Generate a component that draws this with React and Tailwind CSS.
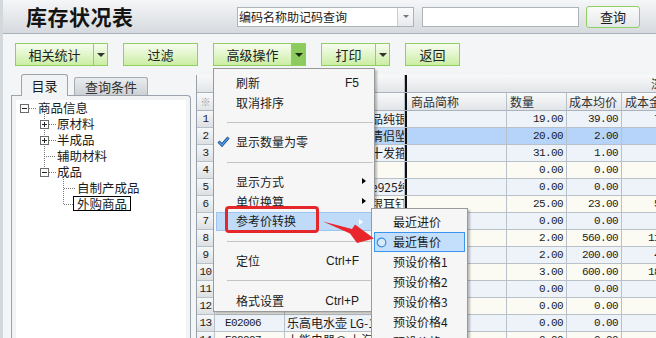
import React from "react";

const rows = [
  { no: 1, code: "E01001", name: "韩版时尚水晶饰品纯银", qty: "19.00", price: "39.00", amt: "741.00" },
  { no: 2, code: "E01002", name: "纯银时尚韩版款情侣坠", qty: "20.00", price: "2.00", amt: "40.00", selected: true },
  { no: 3, code: "E01003", name: "韩版水钻珍珠镶十发箍", qty: "31.00", price: "1.00", amt: "31.00" },
  { no: 4, code: "E01004", name: "水晶手链", qty: "0.00", price: "0.00", amt: "0.00" },
  { no: 5, code: "E01005", name: "纯银吊坠锁骨链e925纯银", qty: "0.00", price: "0.00", amt: "0.00" },
  { no: 6, code: "E01006", name: "时尚气质镶钻纯银耳钉", qty: "25.00", price: "23.00", amt: "575.00" },
  { no: 7, code: "E01007", name: "复古银手镯", qty: "0.00", price: "0.00", amt: "0.00" },
  { no: 8, code: "E02001", name: "美的电饭煲", qty: "2.00", price: "560.00", amt: "1120.00" },
  { no: 9, code: "E02002", name: "九阳豆浆机", qty: "2.00", price: "200.00", amt: "400.00" },
  { no: 10, code: "E02003", name: "格力空调扇", qty: "3.00", price: "600.00", amt: "1800.00" },
  { no: 11, code: "E02004", name: "苏泊尔电压力锅", qty: "0.00", price: "0.00", amt: "0.00" },
  { no: 12, code: "E02005", name: "飞利浦电熨斗", qty: "0.00", price: "0.00", amt: "0.00" },
  { no: 13, code: "E02006", name: "乐高电水壶  LG-1808", qty: "0.00", price: "0.00", amt: "0.00" },
  { no: 14, code: "E02007", name: "上能电器@ 上海", qty: "0.00", price: "0.00", amt: "0.00" },
];

const num = "font-['Liberation_Mono',monospace] text-[11px] tracking-[-0.6px]";
const greenBtn =
  "flex h-[23px] shrink-0 items-center justify-center border border-[#8fd05e] bg-gradient-to-b from-[#f7fcf0] to-[#cbeea2] text-[13px] leading-none text-[#222]";

function Caret({ dark }) {
  return <span className={`h-0 w-0 border-x-[4px] border-t-[4px] border-x-transparent ${dark ? "border-t-[#1c2a10]" : "border-t-[#333]"}`} />;
}

function SplitButton({ label, width, pressed }) {
  return (
    <div className="flex shrink-0">
      <div className={`${greenBtn} ${width}`}>{label}</div>
      <div
        className={`flex h-[23px] w-[14px] items-center justify-center border border-l-0 border-[#8fd05e] ${
          pressed ? "bg-[#8ccb5e]" : "bg-gradient-to-b from-[#f7fcf0] to-[#cbeea2]"
        }`}
      >
        <Caret dark={pressed} />
      </div>
    </div>
  );
}

function Header() {
  return (
    <div className="flex h-[34px] shrink-0 items-center border-b border-[#a6b0ba] bg-gradient-to-b from-[#f5f6f8] to-[#d6dade] pl-[23px]">
      <span className="w-[211px] shrink-0 text-[21px] font-bold leading-none tracking-[0.5px] text-[#141414]">库存状况表</span>
      <div className="flex h-[20px] w-[177px] shrink-0 border border-[#abb3bb] bg-white">
        <span className="flex-1 pl-[1px] text-[12px] leading-[18px]">编码名称助记码查询</span>
        <span className="flex w-[16px] items-center justify-center border-l border-[#c9ced3] bg-gradient-to-b from-[#fbfbfc] to-[#e8ebee]">
          <span className="h-0 w-0 border-x-[3px] border-t-[3px] border-x-transparent border-t-[#777]" />
        </span>
      </div>
      <div className="ml-[8px] h-[20px] w-[157px] shrink-0 border border-[#abb3bb] bg-white" />
      <div className="ml-[7px] flex h-[22px] w-[54px] shrink-0 items-center justify-center rounded-[3px] border border-[#8fd05e] bg-gradient-to-b from-[#fbfbfb] to-[#e4e7e9] text-[13px] leading-none">
        查询
      </div>
    </div>
  );
}

function Toolbar() {
  return (
    <div className="mt-[9px] flex h-[23px] shrink-0 pl-[12px]">
      <SplitButton label="相关统计" width="w-[79px]" />
      <div className={`${greenBtn} ml-[15px] w-[75px]`}>过滤</div>
      <div className="ml-[15px]">
        <SplitButton label="高级操作" width="w-[79px]" pressed />
      </div>
      <div className="ml-[15px]">
        <SplitButton label="打印" width="w-[55px]" />
      </div>
      <div className={`${greenBtn} ml-[15px] w-[55px]`}>返回</div>
    </div>
  );
}

function TreeLines() {
  const dot = { stroke: "#7a7a7a", strokeWidth: 1, strokeDasharray: "1 1", fill: "none" };
  const box = (x, y, plus) => (
    <g>
      <rect x={x + 0.5} y={y + 0.5} width="8" height="8" fill="#fff" stroke="#6b6b6b" />
      <path d={`M${x + 2} ${y + 4.5}H${x + 7}`} stroke="#222" />
      {plus ? <path d={`M${x + 4.5} ${y + 2}V${y + 7}`} stroke="#222" /> : null}
    </g>
  );
  return (
    <svg className="absolute left-0 top-0" width="170" height="120">
      <path d="M28.5 12V72" {...dot} />
      <path d="M13 8.5H21" {...dot} />
      <path d="M33 24.5H40M33 40.5H40M28 56.5H40M33 72.5H40" {...dot} />
      <path d="M47.5 77V104" {...dot} />
      <path d="M48 88.5H59M48 104.5H57" {...dot} />
      {box(4, 4, false)}
      {box(24, 20, true)}
      {box(24, 36, true)}
      {box(24, 68, false)}
    </svg>
  );
}

function LeftPanel() {
  const items = [
    { t: "商品信息", pl: "pl-[22px]" },
    { t: "原材料", pl: "pl-[41px]" },
    { t: "半成品", pl: "pl-[41px]" },
    { t: "辅助材料", pl: "pl-[41px]" },
    { t: "成品", pl: "pl-[41px]" },
    { t: "自制产成品", pl: "pl-[61px]" },
  ];
  return (
    <div className="ml-[8px] flex w-[180px] shrink-0 flex-col">
      <div className="flex h-[21px] shrink-0 items-end pl-[10px]">
        <div className="relative z-10 -mb-px flex h-[22px] w-[47px] items-center justify-center rounded-t-[3px] border border-b-0 border-[#9ba4ad] bg-[#f1f3f4] text-[13px] leading-none">
          目录
        </div>
        <div className="ml-[6px] flex h-[18px] w-[74px] items-center justify-center rounded-t-[3px] border border-b-0 border-[#a3acb5] bg-gradient-to-b from-[#eaecee] to-[#ccd1d5] text-[13px] leading-none text-[#333]">
          查询条件
        </div>
      </div>
      <div className="min-h-0 flex-1 rounded-tr-[4px] border border-b-0 border-[#9ba4ad] bg-[#f1f3f4] px-[4px] pt-[4px]">
        <div className="relative h-full bg-white text-[12.5px] leading-[16px]">
          <TreeLines />
          <div className="relative">
            {items.map((it) => (
              <div key={it.t} className={`h-[16px] ${it.pl}`}>
                {it.t}
              </div>
            ))}
            <div className="h-[16px] pl-[57px]">
              <span className="inline-block h-[15px] border border-black px-[3px] leading-[13px]">外购商品</span>
            </div>
          </div>
        </div>
      </div>
    </div>
  );
}

function Cell({ w, className = "", children }) {
  return (
    <div className={`flex h-full shrink-0 items-center overflow-hidden whitespace-nowrap border-r border-[#b8c1ca] ${w} ${className}`}>
      {children}
    </div>
  );
}

function Grid() {
  const hdr = "bg-gradient-to-b from-[#f8f9fa] to-[#e2e5e8]";
  return (
    <div className="ml-[5px] mt-[1px] flex min-w-0 flex-1 flex-col overflow-hidden border-l border-[#97a1ab] bg-white">
      <div className={`flex h-[18px] shrink-0 border-b border-[#aab3bc] ${hdr}`}>
        <Cell w="w-[208px]" />
        <div className="w-[2px] shrink-0 bg-[#111]" />
        <div className="flex-1 whitespace-nowrap pl-[244px] text-[12px] leading-[17px] text-[#333]">深圳仓库</div>
      </div>
      <div className={`flex h-[18px] shrink-0 border-b border-[#aab3bc] text-[12px] text-[#333] ${hdr}`}>
        <Cell w="w-[18px]" className="justify-center border-[#a5aeb7] text-[10px] text-[#999]">※</Cell>
        <Cell w="w-[70px]" className="pl-[3px]">商品编码</Cell>
        <Cell w="w-[120px]" className="pl-[3px]">商品名称</Cell>
        <div className="w-[2px] shrink-0 bg-[#111]" />
        <Cell w="w-[100px]" className="pl-[4px]">商品简称</Cell>
        <Cell w="w-[60px]" className="pl-[3px]">数量</Cell>
        <Cell w="w-[55px]" className="pl-[2px]">成本均价</Cell>
        <Cell w="w-[72px]" className="pl-[3px]">成本金额</Cell>
      </div>
      {rows.map((r) => {
        const bg = r.selected ? "bg-[#b6d4f9]" : r.no % 2 ? "bg-[#eef2f9]" : "bg-[#fcfbf3]";
        return (
          <div key={r.no} className="flex h-[17px] shrink-0 border-b border-[#b8c1ca] text-[12px] leading-none">
            <Cell w="w-[18px]" className={`justify-center border-[#a5aeb7] bg-gradient-to-b from-[#f6f7f8] to-[#dde0e3] ${num}`}>
              {r.no}
            </Cell>
            <Cell w="w-[70px]" className={`pl-[10px] ${bg} ${num}`}>{r.code}</Cell>
            <Cell w="w-[120px]" className={`pl-[2px] ${bg}`}>{r.name}</Cell>
            <div className="w-[2px] shrink-0 bg-[#111]" />
            <Cell w="w-[100px]" className={bg} />
            <Cell w="w-[60px]" className={`justify-end pr-[3px] ${bg} ${num}`}>{r.qty}</Cell>
            <Cell w="w-[55px]" className={`justify-end pr-[3px] ${bg} ${num}`}>{r.price}</Cell>
            <Cell w="w-[72px]" className={`justify-end pr-[3px] ${bg} ${num}`}>{r.amt}</Cell>
          </div>
        );
      })}
    </div>
  );
}

function Check() {
  return (
    <svg width="13" height="11" viewBox="0 0 13 11" className="absolute left-[3px] top-[4px]">
      <path d="M1.5 5.5L5 9L11.5 1.5" fill="none" stroke="#1d3f6e" strokeWidth="3" />
      <path d="M1.5 5.5L5 9L11.5 1.5" fill="none" stroke="#4b9af0" strokeWidth="1.6" />
    </svg>
  );
}

function SubArrow({ light }) {
  return (
    <span
      className={`absolute right-[8px] top-[6px] h-0 w-0 border-y-[3.5px] border-l-[4px] border-y-transparent ${
        light ? "border-l-white" : "border-l-black"
      }`}
    />
  );
}

function ContextMenu() {
  const item = "relative flex h-[19.8px] items-center pl-[22px] pr-[15px]";
  const sep = (
    <div className="flex h-[19.8px] items-center pl-[13px] pr-[1px]">
      <div className="h-px w-full bg-[#c4c4c4]" />
    </div>
  );
  const sc = "ml-auto font-['Liberation_Sans',sans-serif] text-[12px]";
  return (
    <div className="absolute left-[213px] top-[68px] w-[162px] border border-[#9a9a9a] bg-[#f6f6f6] pt-[4px] text-[12px] leading-none shadow-[2px_2px_2px_rgba(0,0,0,0.25)]">
      <div className={item}>
        刷新<span className={sc}>F5</span>
      </div>
      <div className={item}>取消排序</div>
      {sep}
      <div className={item}>
        <Check />
        显示数量为零
      </div>
      {sep}
      <div className={item}>
        显示方式
        <SubArrow />
      </div>
      <div className={item}>
        单位换算
        <SubArrow />
      </div>
      <div className="relative mx-[2px] flex h-[19.8px] items-center border border-[#9cc6f1] bg-[#c0dbf8] pl-[19px]">
        参考价转换
        <SubArrow light />
      </div>
      {sep}
      <div className={item}>
        定位<span className={sc}>Ctrl+F</span>
      </div>
      {sep}
      <div className={item}>
        格式设置<span className={sc}>Ctrl+P</span>
      </div>
    </div>
  );
}

function SubMenu() {
  const item = "flex h-[20px] items-center pl-[21px]";
  return (
    <div className="absolute left-[371px] top-[208px] h-[140px] w-[97px] border border-[#9a9a9a] bg-[#f6f6f6] pt-[3px] text-[12px] leading-none shadow-[2px_2px_2px_rgba(0,0,0,0.25)]">
      <div className={item}>最近进价</div>
      <div className="relative mx-[2px] flex h-[20px] items-center border border-[#3d96ee] bg-[#c4dffb] pl-[18px]">
        <svg width="11" height="11" className="absolute left-[1px] top-[3.5px]">
          <circle cx="5.5" cy="5.5" r="4.3" fill="#dbeafb" stroke="#3a8ee6" strokeWidth="1.2" />
        </svg>
        最近售价
      </div>
      <div className={item}>预设价格1</div>
      <div className={item}>预设价格2</div>
      <div className={item}>预设价格3</div>
      <div className={item}>预设价格4</div>
      <div className={item}>预设价格5</div>
    </div>
  );
}

export default function App() {
  return (
    <div className="relative flex h-[338px] w-[656px] overflow-hidden bg-[#f3f5f7] font-['Noto_Sans_CJK_SC',sans-serif] text-[12px] text-[#1b1b1b]">
      <div className="w-[3px] shrink-0 bg-[#d3d8dc]" />
      <div className="flex min-w-0 flex-1 flex-col">
        <Header />
        <Toolbar />
        <div className="mt-[8px] flex min-h-0 flex-1">
          <LeftPanel />
          <Grid />
        </div>
      </div>
      <ContextMenu />
      <SubMenu />
      <div className="absolute left-[225px] top-[206px] h-[27px] w-[94px] rounded-[4px] border-[3px] border-[#e5262b]" />
      <svg className="absolute left-[318px] top-[215px]" width="62" height="34">
        <polygon points="5,6.5 34,14 37,9.5 56,23.5 39,28 32,18.5" fill="#e8262b" />
      </svg>
    </div>
  );
}
